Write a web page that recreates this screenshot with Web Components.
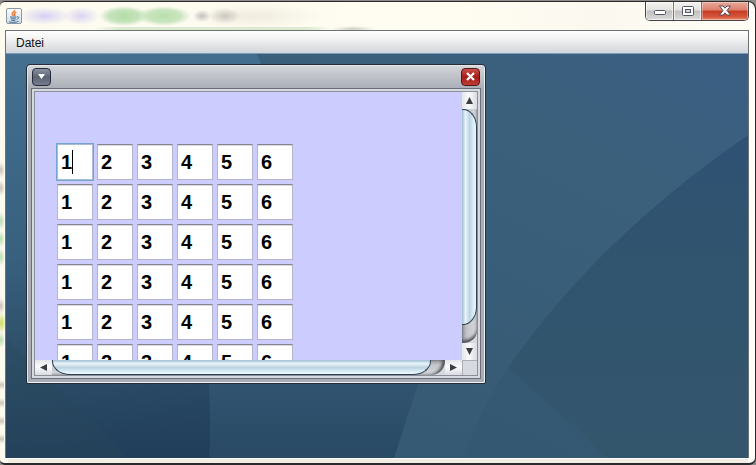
<!DOCTYPE html>
<html lang="de">
<head>
  <meta charset="UTF-8">
  <meta name="viewport" content="width=device-width, initial-scale=1.0">
  <title>Datei</title>
  <style>
    html, body {
      height: 100%;
      margin: 0;
    }
    body {
      box-sizing: border-box;
      padding-top: 1px;
      background: #8d8c88;
      font: 12px/16px "Liberation Sans", Arial, sans-serif;
      color: #111;
      overflow: hidden;
    }
  </style>
</head>
<body>
  <aero-window>
    <menu-bar slot="menu">
      <button type="button">Datei</button>
    </menu-bar>
    <desktop-pane>
      <internal-frame>
        <scroll-pane>
          <number-grid rows="6" cols="6"></number-grid>
        </scroll-pane>
      </internal-frame>
    </desktop-pane>
  </aero-window>

  <template id="aero-window">
    <style>
      :host {
        display: flex;
        flex-direction: column;
        box-sizing: border-box;
        height: 100%;
        border: solid #2b2a2c;
        border-width: 1px 1px 2px 0;
        border-radius: 5px 8px 7px 5px;
        padding: 0 6px 5px 5px;
        background:
          linear-gradient(#f1ece4, #f1ece4) 8px 100% / 98% 4px no-repeat,
          repeating-linear-gradient(#d8d0c600 0 8px, #cfc6bc 13px, #d8d0c600 18px) 0 370px / 4px 80px no-repeat,
          radial-gradient(closest-side, #c9c0b6, transparent) -3px 160px / 8px 16px no-repeat,
          radial-gradient(closest-side, #c9c0b6, transparent) -3px 178px / 8px 16px no-repeat,
          radial-gradient(closest-side, #b5dfb0, transparent) -3px 210px / 8px 18px no-repeat,
          radial-gradient(closest-side, #b5dfb0, transparent) -3px 228px / 8px 18px no-repeat,
          radial-gradient(closest-side, #b5dfb0, transparent) -3px 246px / 8px 18px no-repeat,
          radial-gradient(closest-side, #c9c0b6, transparent) -3px 296px / 8px 16px no-repeat,
          radial-gradient(closest-side, #cbdc5c, transparent) -3px 310px / 9px 22px no-repeat,
          radial-gradient(closest-side, #b5dfb0, transparent) -3px 330px / 8px 16px no-repeat,
          linear-gradient(90deg, #fdfaf0, #fffdf2 60%, #fbf9ef 80%, #fffdf6);
      }
      header {
        flex: none;
        display: flex;
        justify-content: space-between;
        height: 28px;
        background:
          radial-gradient(closest-side, #d6d0f3, transparent) 14px 5px / 52px 18px no-repeat,
          radial-gradient(closest-side, #d9d4f2, transparent) 58px 5px / 36px 18px no-repeat,
          radial-gradient(closest-side, #b3dca8, #c4e3ba 60%, transparent) 94px 4px / 50px 20px no-repeat,
          radial-gradient(closest-side, #b9deaf, #c8e5be 60%, transparent) 132px 4px / 54px 20px no-repeat,
          radial-gradient(closest-side, #c5c0bc, transparent) 188px 8px / 18px 12px no-repeat,
          radial-gradient(closest-side, #ccc7c1, transparent) 204px 6px / 32px 16px no-repeat,
          linear-gradient(90deg, transparent, #dcebcf 10% 90%, transparent) 90px 25px / 236px 3px no-repeat,
          radial-gradient(closest-side, #d0cdc6, transparent) 326px 24px / 44px 6px no-repeat,
          radial-gradient(closest-side, #f0ecdf, transparent) 180px 0 / 140px 28px no-repeat;
      }
      .logo {
        margin: 6px 0 0 1px;
      }
      .caption {
        display: flex;
        align-self: flex-start;
        box-sizing: border-box;
        height: 19px;
        border: 1px solid #454548;
        border-top: 0;
        border-radius: 0 0 5px 5px;
        overflow: hidden;
      }
      button {
        display: grid;
        place-items: center;
        width: 28px;
        margin: 0;
        padding: 0 0 1px;
        border: 0;
        border-right: 1px solid #77777a;
        background: linear-gradient(#f4f3ef, #e3e2df 45%, #bfbfbf 50%, #dcdbd8);
        box-shadow: inset 0 0 0 1px #ffffff99;
      }
      .close {
        width: 46px;
        border: 0;
        background: linear-gradient(#e9aa9b, #dc7f6b 45%, #c43a22 50%, #d85a3e 85%, #e79678);
        box-shadow: inset 0 0 0 1px #ffffff55;
      }
      svg {
        display: block;
      }
      main {
        flex: 1;
        min-height: 0;
        display: flex;
        flex-direction: column;
        border: 1px solid #6c7276;
        border-width: 1px 1px 0 1px;
        box-shadow: 0 1px #fff;
      }
      ::slotted(desktop-pane) {
        flex: 1;
      }
    </style>
    <header>
      <svg class="logo" width="16" height="16" viewBox="0 0 16 16" aria-hidden="true">
        <defs>
          <linearGradient id="l" x2="0" y2="1"><stop stop-color="#fff"/><stop offset="1" stop-color="#cfd8e2"/></linearGradient>
        </defs>
        <rect x=".5" y=".5" width="15" height="15" rx="1.5" fill="url(#l)" stroke="#8b98a5"/>
        <path d="M8.600 2c.8 1.600-3 2.400-2.400 4 .3.700 1.200 1.200 1.200 2M10.400 4.200c-1.800.7-2.500 1.700-1.700 2.500.5.500.2 1-.2 1.500" fill="none" stroke="#e8762c" stroke-width="1.400"/>
        <path d="M4 9h6.500M4.700 10.800h5.200M5.300 12.400h4M3 13.900c3 .7 7 .6 9.500-.5M11 8.800c2.300-.6 2.400 1.800-.4 2.500" fill="none" stroke="#3f709a"/>
      </svg>
      <div class="caption">
        <button type="button" aria-label="Minimieren">
          <svg width="14" height="13" viewBox="0 0 14 13"><rect x="1.500" y="6.500" width="11" height="4" rx="1" fill="#fff" stroke="#51566a"/></svg>
        </button>
        <button type="button" aria-label="Maximieren">
          <svg width="14" height="13" viewBox="0 0 14 13"><rect x="1.500" y="2.500" width="11" height="9" rx="1" fill="#fff" stroke="#51566a"/><rect x="4.500" y="5.500" width="5" height="3" fill="#d5d5d5" stroke="#51566a"/></svg>
        </button>
        <button type="button" class="close" aria-label="Schließen">
          <svg width="14" height="13" viewBox="0 0 14 13"><path d="M1.500 2h3.600L7 4.200 8.900 2h3.600L9 6.500l3.500 4.500H8.900L7 8.800 5.100 11H1.500L5 6.500z" fill="#fff" stroke="#5a4a58"/></svg>
        </button>
      </div>
    </header>
    <main>
      <slot name="menu"></slot>
      <slot></slot>
    </main>
  </template>

  <template id="menu-bar">
    <style>
      :host {
        display: flex;
        flex: none;
        height: 22px;
        border-bottom: 1px solid #7e9cb5;
        background: linear-gradient(#fff, #f5f5f6 30%, #dcdde0 80%, #d0d7df);
      }
      ::slotted(button) {
        margin: 0;
        padding: 1px 10px 0;
        border: 0;
        background: none;
        font: inherit;
        color: inherit;
      }
    </style>
    <slot></slot>
  </template>

  <template id="desktop-pane">
    <style>
      :host {
        display: block;
        position: relative;
        min-height: 0;
        overflow: hidden;
        background: #3a607b;
      }
      svg {
        display: block;
        width: 100%;
        height: 100%;
      }
      ::slotted(internal-frame) {
        position: absolute;
        left: 20px;
        top: 10px;
      }
    </style>
    <svg viewBox="0 0 742 404" preserveAspectRatio="none" aria-hidden="true">
      <defs>
        <linearGradient id="a" x2=".12" y2="1"><stop stop-color="#457090"/><stop offset=".5" stop-color="#38607f"/><stop offset=".66" stop-color="#31546f"/><stop offset="1" stop-color="#213e5a"/></linearGradient>
        <linearGradient id="b" x2="0" y2="1"><stop stop-color="#3a6080"/><stop offset=".8" stop-color="#325571"/><stop offset="1" stop-color="#294964"/></linearGradient>
        <linearGradient id="c" x1="1" y1="0" x2=".4" y2="1"><stop stop-color="#3b5f84"/><stop offset=".35" stop-color="#3a607b"/><stop offset="1" stop-color="#375a74"/></linearGradient>
        <linearGradient id="d" x2="0" y2="1"><stop stop-color="#2f5175"/><stop offset=".3" stop-color="#30546f"/><stop offset="1" stop-color="#34566d"/></linearGradient>
      </defs>
      <rect width="742" height="404" fill="url(#a)"/>
      <path d="M0 285Q70 350 122 404H0z" fill="#2b4a58" opacity=".3"/>
      <path d="M251 0Q275 55 285 100L200 300Q206 350 203 404H742V0z" fill="url(#b)"/>
      <path d="M251 0Q275 55 285 100L480 150Q430 270 388 404H742V0z" fill="url(#c)"/>
      <path d="M742 81Q590 186 502 314L566 370 600 404H742z" fill="url(#d)"/>
      <path d="M502 314Q475 355 457 404H600L566 370z" fill="#34566f" opacity=".5"/>
    </svg>
    <slot></slot>
  </template>

  <template id="internal-frame">
    <style>
      :host {
        display: flex;
        flex-direction: column;
        box-sizing: border-box;
        width: 460px;
        height: 320px;
        border: 1px solid #272d38;
        border-radius: 4px 4px 2px 2px;
        padding: 0 4px 4px;
        background: linear-gradient(#d4d6da, #a9adb6 24px, #a9adb6);
        box-shadow: inset 1px 1px #e4e6ea, inset -1px -1px #f0f1f3;
      }
      header {
        flex: none;
        display: flex;
        justify-content: space-between;
        align-items: center;
        height: 23px;
        padding: 0 1px;
      }
      button {
        display: grid;
        place-items: center;
        width: 19px;
        height: 18px;
        margin: 0;
        padding: 0;
        border: 1px solid #262b39;
        border-radius: 4px;
        background: linear-gradient(#8a91a1, #5b6375 50%, #747c8e);
      }
      .close {
        border-color: #571518;
        background: linear-gradient(#c9504a, #a51d17 50%, #bd3f36);
      }
      svg {
        display: block;
      }
      .content {
        flex: 1;
        min-height: 0;
        display: flex;
        border: 1px solid #6b6f78;
        padding: 2px;
        background: #d6d9df;
      }
      ::slotted(*) {
        flex: 1;
      }
    </style>
    <header>
      <button type="button" aria-label="Fenstermenü">
        <svg width="9" height="9" viewBox="0 0 9 9"><path d="M1 2h7L4.500 7z" fill="#fff"/></svg>
      </button>
      <button type="button" class="close" aria-label="Fenster schließen">
        <svg width="11" height="11" viewBox="0 0 11 11"><path d="M2 2l7 7M9 2L2 9" stroke="#fff" stroke-width="2.200"/></svg>
      </button>
    </header>
    <div class="content"><slot></slot></div>
  </template>

  <template id="scroll-pane">
    <style>
      :host {
        display: grid;
        grid-template: minmax(0, 1fr) 15px / minmax(0, 1fr) 15px;
        border: 1px solid #8b8f98;
        background: #d6d9df;
      }
      .view {
        overflow: hidden;
        background: #ccccff;
      }
      .corner {
        border: solid #a9adb5;
        border-width: 1px 0 0 1px;
      }
    </style>
    <div class="view"><slot></slot></div>
    <scroll-bar></scroll-bar>
    <scroll-bar horizontal></scroll-bar>
    <div class="corner"></div>
  </template>

  <template id="scroll-bar">
    <style>
      :host {
        display: flex;
        flex-direction: column;
        overflow: hidden;
      }
      :host([horizontal]) {
        flex-direction: row;
      }
      button {
        flex: none;
        display: grid;
        place-items: center;
        width: 15px;
        height: 17px;
        margin: 0;
        padding: 0;
        border: 0;
        background: linear-gradient(90deg, #e4e5e9, #fbfbfc 45%, #d9dbe0);
      }
      .track {
        flex: 1;
        display: flex;
        flex-direction: column;
        background: linear-gradient(90deg, #9a9da3, #c4c6cb 35%, #d6d8dc);
        border-radius: 0 0 14px 0 / 0 0 12px 0;
        box-shadow: inset 0 -3px 3px #55575c;
      }
      .thumb {
        flex: 12;
        border: 1px solid #2f4254;
        border-left: 0;
        border-radius: 0 14px 14px 0 / 0 18px 18px 0;
        background: linear-gradient(90deg, #9fbdd2, #e8f4fb 25%, #bcd3e2 55%, #d3e8f3 75%, #ecfafd);
      }
      .rest {
        flex: 1;
      }
      svg {
        display: block;
      }
      :host([horizontal]) button {
        width: 17px;
        height: 15px;
        background: linear-gradient(#e4e5e9, #fbfbfc 45%, #d9dbe0);
      }
      :host([horizontal]) svg {
        transform: rotate(-90deg);
      }
      :host([horizontal]) .track {
        flex-direction: row;
        background: linear-gradient(#9a9da3, #c4c6cb 35%, #d6d8dc);
        border-radius: 0 0 14px 0;
        box-shadow: inset -3px 0 3px #55575c;
      }
      :host([horizontal]) .thumb {
        flex: 27;
        border: 1px solid #2f4254;
        border-top: 0;
        border-radius: 0 0 18px 18px / 0 0 14px 14px;
        background: linear-gradient(#9fbdd2, #e8f4fb 25%, #bcd3e2 55%, #d3e8f3 75%, #ecfafd);
      }
    </style>
    <button type="button" aria-label="Zurück">
      <svg width="9" height="9" viewBox="0 0 9 9"><path d="M1 8h7L4.500 1z" fill="#3a3d42"/></svg>
    </button>
    <div class="track"><div class="thumb"></div><div class="rest"></div></div>
    <button type="button" aria-label="Weiter">
      <svg width="9" height="9" viewBox="0 0 9 9"><path d="M1 1h7L4.500 8z" fill="#3a3d42"/></svg>
    </button>
  </template>

  <template id="number-grid">
    <style>
      :host {
        display: grid;
        gap: 4px;
        justify-content: start;
        padding: 52px 22px;
      }
    </style>
  </template>

  <template id="number-cell">
    <style>
      :host {
        display: block;
        position: relative;
        width: 36px;
        height: 36px;
      }
      input {
        box-sizing: border-box;
        display: block;
        width: 100%;
        height: 100%;
        margin: 0;
        padding: 0 3px;
        border: 1px solid #b4b4cc;
        border-top-color: #85858f;
        border-radius: 0;
        background: #fff;
        box-shadow: inset 0 1px #d9d9de;
        font: bold 20px/24px "Liberation Sans", Arial, sans-serif;
        color: #000;
        outline: 0;
      }
      :host([active]) input {
        border-color: #a9bdd6;
        box-shadow: 0 0 0 1px #73a4d1;
      }
      .caret {
        display: none;
        position: absolute;
        left: 15px;
        top: 6px;
        width: 1px;
        height: 24px;
        background: #000;
      }
      :host([active]) .caret {
        display: block;
      }
    </style>
    <input type="text">
    <span class="caret"></span>
  </template>

  <script>
    // copies the template with the same id as the tag into the shadow root
    class BaseElement extends HTMLElement {
      constructor() {
        super();
        const t = document.getElementById(this.localName);
        this.attachShadow({mode: 'open'}).appendChild(t.content.cloneNode(true));
      }
    }

    class NumberCell extends BaseElement {
      connectedCallback() {
        const input = this.shadowRoot.querySelector('input');
        input.value = this.getAttribute('value');
        input.setAttribute('aria-label', this.getAttribute('label'));
      }
    }

    class NumberGrid extends BaseElement {
      connectedCallback() {
        const rows = Number(this.getAttribute('rows'));
        const cols = Number(this.getAttribute('cols'));
        this.style.gridTemplateColumns = `repeat(${cols}, 36px)`;
        for (let r = 1; r <= rows; r++) {
          for (let c = 1; c <= cols; c++) {
            const cell = document.createElement('number-cell');
            cell.setAttribute('value', c);
            cell.setAttribute('label', `Zeile ${r}, Spalte ${c}`);
            // the first field has the focus
            cell.toggleAttribute('active', r === 1 && c === 1);
            this.shadowRoot.appendChild(cell);
          }
        }
      }
    }

    customElements.define('number-cell', NumberCell);
    customElements.define('number-grid', NumberGrid);
    customElements.define('scroll-bar', class extends BaseElement {});
    customElements.define('scroll-pane', class extends BaseElement {});
    customElements.define('internal-frame', class extends BaseElement {});
    customElements.define('desktop-pane', class extends BaseElement {});
    customElements.define('menu-bar', class extends BaseElement {});
    customElements.define('aero-window', class extends BaseElement {});
  </script>
</body>
</html>
